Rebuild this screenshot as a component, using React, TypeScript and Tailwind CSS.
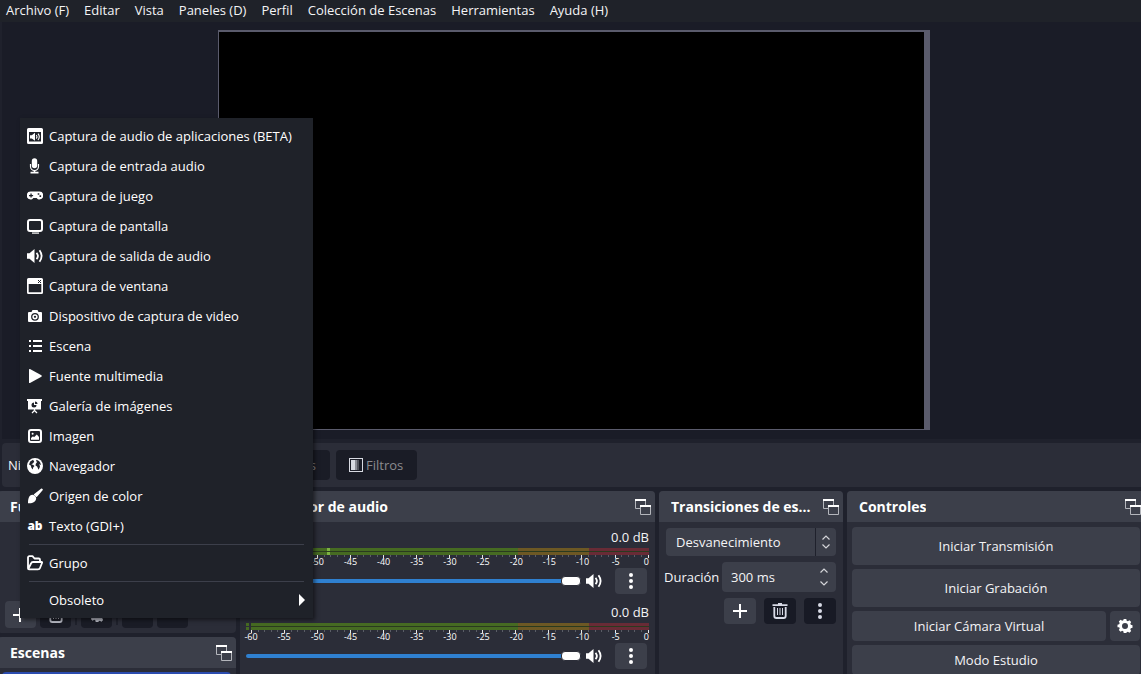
import React, { useState } from 'react';

type IconProps = { className?: string };

/* ---------- Icons ---------- */

const Svg = ({ children, className = '' }: { children: React.ReactNode; className?: string }) => (
  <svg viewBox="0 0 16 16" width="16" height="16" fill="currentColor" className={`shrink-0 ${className}`} aria-hidden="true">
    {children}
  </svg>
);

const AppAudioIcon = () => (
  <Svg>
    <path fillRule="evenodd" d="M1.5 0h13A1.5 1.5 0 0 1 16 1.5v13a1.5 1.5 0 0 1-1.5 1.5h-13A1.5 1.5 0 0 1 0 14.500v-13A1.500 1.500 0 0 1 1.500 0zM2 4v9.500h12V4z" />
    <path d="M3 7.200h1.800L8 4.800v8L4.800 10.400H3z" />
    <path d="M9.300 7q1.400 1.800 0 3.600M11 5.600q2.600 3.200 0 6.400" fill="none" stroke="currentColor" strokeWidth="1.100" />
  </Svg>
);

const MicIcon = () => (
  <Svg>
    <rect x="4.800" y="0.300" width="5.400" height="10" rx="2.700" />
    <path d="M3.500 6v2.500a4 4 0 0 0 8 0V6" fill="none" stroke="currentColor" strokeWidth="1.200" />
    <path d="M6.700 12h1.600v1.800h3.200V15.500h-8v-1.700h3.200z" />
  </Svg>
);

const GamepadIcon = () => (
  <Svg>
    <path fillRule="evenodd" d="M4 3.500h8a4 4 0 0 1 .5 8c-1.200 0-2-.5-2.800-1.500H6.300c-.8 1-1.600 1.500-2.800 1.500a4 4 0 0 1 .5-8zM3.400 5.500v1.400H2v1.300h1.400v1.400h1.300V8.200h1.400V6.900H4.700V5.500zM10.700 5.200v1.600h1.600V5.200zM12.500 7.300v1.600h1.600V7.300z" />
  </Svg>
);

const DisplayIcon = () => (
  <Svg>
    <rect x="1" y="2" width="14" height="11" rx="2" fill="none" stroke="currentColor" strokeWidth="2" />
    <rect x="5" y="14.500" width="7" height="1.200" />
  </Svg>
);

const SpeakerIcon = ({ className }: IconProps) => (
  <Svg className={className}>
    <path d="M0 5.300h2.500L7.500 1v14L2.500 10.700H0z" />
    <path d="M9.500 4.800q2.800 3.200 0 6.400M12.500 2.300q4.200 5.700 0 11.400" fill="none" stroke="currentColor" strokeWidth="1.800" />
  </Svg>
);

const WindowIcon = () => (
  <Svg>
    <path fillRule="evenodd" d="M1.500 0h13A1.500 1.500 0 0 1 16 1.500v13a1.500 1.500 0 0 1-1.500 1.500h-13A1.500 1.500 0 0 1 0 14.500v-13A1.500 1.500 0 0 1 1.500 0zM1.700 6v8.300h12.600V6z" />
    <path d="M11 2l3 3M14 2l-3 3" stroke="#1f2229" strokeWidth="1" />
  </Svg>
);

const CameraIcon = () => (
  <Svg>
    <path fillRule="evenodd" d="M5.500 2h5l1 2H14a1 1 0 0 1 1 1v8a1 1 0 0 1-1 1H2a1 1 0 0 1-1-1V5a1 1 0 0 1 1-1h2.500zM8 4.900a3.900 3.900 0 1 0 0 7.800 3.900 3.900 0 0 0 0-7.800z" />
    <circle cx="8" cy="8.800" r="1.900" fill="none" stroke="currentColor" strokeWidth="1.500" />
  </Svg>
);

const ListIcon = () => (
  <Svg>
    <path d="M2 2h2v2H2zM6 2h9v2H6zM2 7h2v2H2zM6 7h9v2H6zM2 12h2v2H2zM6 12h9v2H6z" />
  </Svg>
);

const PlayIcon = () => (
  <Svg>
    <path d="M2 1.500Q2 .6 3 1l11.400 6.300q1 .7 0 1.400L3 15Q2 15.400 2 14.500z" />
  </Svg>
);

const SlideshowIcon = () => (
  <Svg>
    <path fillRule="evenodd" d="M0 1h15v2h-1v8.500H1V3H0zM7 4.500a2.500 2.500 0 1 0 2.500 2.500H7zM8 3.500v2.500h2.500A2.500 2.500 0 0 0 8 3.500z" />
    <path d="M7.500 11v2M7.500 12.500L5 15M7.500 12.500L10 15" stroke="currentColor" strokeWidth="1.200" fill="none" />
  </Svg>
);

const ImageIcon = () => (
  <Svg>
    <rect x="2" y="2" width="12" height="12" rx="2" fill="none" stroke="currentColor" strokeWidth="2" />
    <circle cx="5.600" cy="5.800" r="1" />
    <path d="M4 11.800V10l2-1.800 1 1L9.800 6.500 12 9v2.800z" />
  </Svg>
);

const GlobeIcon = () => (
  <Svg>
    <circle cx="8" cy="8" r="8" />
    <path d="M6 1.800L3.200 3.500 2 6.500l1.800 1 .6 2.300 1.300 1.700.6-2.200L7.500 8 6 6.800 4.300 6.600 6.300 5 7.200 3.500zM9.500 1.800L9 3.200l1.300.6-1.500 1.900L8.500 7.600l1.600.9.700 1.600.6 1.600 1.100-1.700.5-1.900-1.100-1.800 2 .6-.6-2.100L12 3z" fill="#1f2229" />
  </Svg>
);

const BrushIcon = () => (
  <Svg>
    <path d="M14.300.6a1.200 1.200 0 0 1 1.500 1.500L9.600 9.200 6.600 6.600z" />
    <path d="M5.600 6.800A4.200 4.200 0 0 1 9.200 10.500C8.800 13.700 5.500 15.700 1 15.200 1 11 1.800 6.800 5.600 6.800z" />
  </Svg>
);

const TextIcon = () => (
  <span className="w-4 shrink-0 text-center text-xs leading-4 font-extrabold" aria-hidden="true">ab</span>
);

const FolderIcon = () => (
  <Svg>
    <path d="M1 13.500V2.500A1.300 1.300 0 0 1 2.300 1.200H5.500L7.500 3.500h4.200A1.300 1.300 0 0 1 13 4.800V6.500M1.300 13.800L4 8.500Q4.500 7 6 7h8.500q.9 0 .5 1l-2 5q-.4 1.300-2 1.300H2q-1 0-1-1" fill="none" stroke="currentColor" strokeWidth="1.800" strokeLinejoin="round" />
  </Svg>
);

const PopoutIcon = () => (
  <Svg className="text-[#b4b6bc]">
    <path d="M.5 2v7.500H5M10.500 2v4" fill="none" stroke="currentColor" />
    <path d="M0 0h11v2H0z" fill="#fff" />
    <path d="M5.500 8v7.500h10V8" fill="none" stroke="currentColor" />
    <path d="M5 6h11v2H5z" fill="#fff" />
  </Svg>
);

const PlusIcon = () => (
  <Svg>
    <path d="M7 1h2v6h6v2H9v6H7V9H1V7h6z" />
  </Svg>
);

const TrashIcon = () => (
  <Svg>
    <path d="M6 0h4v1.200h5.500V3H.5V1.200H6z" />
    <path d="M2.300 4v9q0 2 2 2h7.400q2 0 2-2V4" fill="none" stroke="currentColor" strokeWidth="1.800" />
    <path d="M5.500 5v7M8 5v7M10.500 5v7" stroke="currentColor" strokeWidth="1" />
  </Svg>
);

const DotsIcon = () => (
  <Svg>
    <circle cx="8" cy="2" r="2" />
    <circle cx="8" cy="8" r="2" />
    <circle cx="8" cy="14" r="2" />
  </Svg>
);

const GearIcon = () => (
  <Svg>
    <path fillRule="evenodd" d="M6.700 1h2.600l.4 1.700 1.200.5 1.500-.9 1.800 1.800-.9 1.500.5 1.200 1.700.4v2.600l-1.700.4-.5 1.200.9 1.500-1.800 1.800-1.500-.9-1.200.5L9.300 15H6.700l-.4-1.700-1.200-.5-1.500.9-1.800-1.800.9-1.500-.5-1.200L.5 9.300V6.700l1.700-.4.5-1.200-.9-1.500 1.800-1.800 1.500.9 1.200-.5zM8 5a3 3 0 1 0 0 6 3 3 0 0 0 0-6z" />
  </Svg>
);

const FiltersIcon = () => (
  <Svg className="text-[#d8dae2]">
    <rect x="1.500" y="1.500" width="13" height="13" fill="none" stroke="currentColor" />
    <path d="M3 3h4v10H3z" />
    <path d="M7 3h2v10H7z" opacity=".6" />
    <path d="M9 3h2v10H9z" opacity=".3" />
  </Svg>
);

const Chevron = ({ up }: { up?: boolean }) => (
  <svg viewBox="0 0 8 5" width="8" height="5" fill="none" stroke="#d4d5d9" strokeWidth="1.200" aria-hidden="true">
    <path d={up ? 'M.5 4.500L4 1l3.500 3.500' : 'M.5 .5L4 4 7.500 .5'} />
  </svg>
);

/* ---------- Data ---------- */

const menuBar = ['Archivo (F)', 'Editar', 'Vista', 'Paneles (D)', 'Perfil', 'Colección de Escenas', 'Herramientas', 'Ayuda (H)'];

const sources = [
  { label: 'Captura de audio de aplicaciones (BETA)', icon: <AppAudioIcon /> },
  { label: 'Captura de entrada audio', icon: <MicIcon /> },
  { label: 'Captura de juego', icon: <GamepadIcon /> },
  { label: 'Captura de pantalla', icon: <DisplayIcon /> },
  { label: 'Captura de salida de audio', icon: <SpeakerIcon /> },
  { label: 'Captura de ventana', icon: <WindowIcon /> },
  { label: 'Dispositivo de captura de video', icon: <CameraIcon /> },
  { label: 'Escena', icon: <ListIcon /> },
  { label: 'Fuente multimedia', icon: <PlayIcon /> },
  { label: 'Galería de imágenes', icon: <SlideshowIcon /> },
  { label: 'Imagen', icon: <ImageIcon /> },
  { label: 'Navegador', icon: <GlobeIcon /> },
  { label: 'Origen de color', icon: <BrushIcon /> },
  { label: 'Texto (GDI+)', icon: <TextIcon /> },
];

const scale = [-60, -55, -50, -45, -40, -35, -30, -25, -20, -15, -10, -5, 0];
const minorTicks = Array.from({ length: 61 }, (_, i) => i);

/* ---------- Building blocks ---------- */

const Dock = ({ title, className = '', children }: { title: string; className?: string; children: React.ReactNode }) => (
  <section className={`flex flex-col overflow-hidden rounded-t bg-[#2b2d38] ${className}`}>
    <header className="flex h-[31px] shrink-0 items-center justify-between gap-3 bg-[#3c3f4a] pr-1 pl-3">
      <h2 className="truncate text-sm font-bold text-white">{title}</h2>
      <PopoutIcon />
    </header>
    {children}
  </section>
);

const MenuItem = ({ label, icon, submenu }: { label: string; icon?: React.ReactNode; submenu?: boolean }) => (
  <li role="none">
    <button role="menuitem" className="flex h-[30px] w-full items-center gap-1.5 pr-2 pl-[7px] text-left hover:bg-[#2f3a63]">
      {icon ?? <span className="w-4" />}
      <span className="flex-1">{label}</span>
      {submenu && (
        <svg viewBox="0 0 6 12" width="6" height="12" fill="#fff" aria-hidden="true">
          <path d="M0 0l6 6-6 6z" />
        </svg>
      )}
    </button>
  </li>
);

const Separator = () => <li role="separator" className="mx-[9px] my-[3px] h-px bg-[#3c3f4a]" />;

const SourceMenu = () => (
  <ul role="menu" className="absolute top-[118px] left-5 z-10 w-[293px] bg-[#1f2229] py-[3px] text-white shadow-[2px_2px_4px_rgba(0,0,0,0.5)]">
    {sources.map((s) => (
      <MenuItem key={s.label} label={s.label} icon={s.icon} />
    ))}
    <Separator />
    <MenuItem label="Grupo" icon={<FolderIcon />} />
    <Separator />
    <MenuItem label="Obsoleto" submenu />
  </ul>
);

const MeterBar = ({ peak }: { peak?: string }) => (
  <div className="relative flex h-[3px]">
    <div className="w-[67%] bg-[#466b22]" />
    <div className="w-[18%] bg-[#6d5824]" />
    <div className="flex-1 bg-[#692b36]" />
    {peak && <div className="absolute h-[3px] w-[3px] bg-[#7cb342]" style={{ left: peak }} />}
  </div>
);

const Channel = ({ name, peaks }: { name: string; peaks?: [string, string] }) => {
  const [volume, setVolume] = useState(100);

  return (
    <div className="px-1.5 pt-1.5 pb-[3px]">
      <div className="flex h-5 items-center justify-end pb-0.5">0.0 dB</div>

      <div className="flex gap-0.5">
        <div className="flex w-[3px] flex-col gap-px">
          <div className="h-[3px] bg-[#466b22]" />
          <div className="h-[3px] bg-[#466b22]" />
        </div>
        <div className="flex-1">
          <div className="flex flex-col gap-px bg-[#2a3a1f]">
            <MeterBar peak={peaks?.[0]} />
            <MeterBar peak={peaks?.[1]} />
          </div>
          <div className="flex h-[3px] justify-between">
            {minorTicks.map((i) => (
              <span key={i} className={i % 5 === 0 ? 'h-[3px] w-px bg-[#e4e5e8]' : 'h-0.5 w-px bg-[#5a5d66]'} />
            ))}
          </div>
          <div className="flex h-2.5 justify-between text-[9px] leading-[8px] text-white">
            {scale.map((db) => (
              <span key={db} className={db === 0 ? 'flex w-0 justify-end' : 'flex w-0 justify-center'}>{db}</span>
            ))}
          </div>
        </div>
      </div>

      <div className="flex h-[26px] items-center">
        <input
          type="range"
          aria-label={`Volumen de ${name}`}
          value={volume}
          onChange={(e) => setVolume(Number(e.target.value))}
          className="h-1 min-w-0 flex-1 appearance-none rounded-sm bg-[#2f80d0] [&::-webkit-slider-thumb]:h-2.5 [&::-webkit-slider-thumb]:w-5 [&::-webkit-slider-thumb]:appearance-none [&::-webkit-slider-thumb]:rounded [&::-webkit-slider-thumb]:border [&::-webkit-slider-thumb]:border-[#2b2d38] [&::-webkit-slider-thumb]:bg-white"
        />
        <button aria-label={`Silenciar ${name}`} className="ml-[5px] text-white">
          <SpeakerIcon />
        </button>
        <button aria-label={`Opciones de ${name}`} className="mr-0.5 ml-[13px] flex h-[26px] w-8 items-center justify-center rounded bg-[#3c3f4a] text-white">
          <DotsIcon />
        </button>
      </div>
    </div>
  );
};

const IconButton = ({ label, active, children }: { label: string; active?: boolean; children: React.ReactNode }) => (
  <button
    aria-label={label}
    className={`flex h-[26px] w-8 items-center justify-center rounded ${active ? 'bg-[#3c3f4a] text-white' : 'bg-[#181a25] text-[#d8dae6]'}`}
  >
    {children}
  </button>
);

const ControlButton = ({ label, className = 'h-[38px]' }: { label: string; className?: string }) => (
  <button className={`flex shrink-0 items-center justify-center rounded bg-[#3c3f4a] hover:bg-[#4a4d59] ${className}`}>{label}</button>
);

/* ---------- Page ---------- */

export default function App() {
  const [transition, setTransition] = useState('Desvanecimiento');
  const [duration, setDuration] = useState(300);

  return (
    <div className="relative flex h-screen flex-col overflow-hidden bg-[#1f212c] font-['Open_Sans','Noto_Sans',sans-serif] text-[13px] leading-5 text-[#f4f4f6]">
      <nav className="flex h-[22px] shrink-0 items-center gap-[15px] bg-[#1f2229] pb-0.5 pl-1.5 whitespace-nowrap">
        {menuBar.map((item) => (
          <button key={item}>{item}</button>
        ))}
      </nav>

      {/* Preview */}
      <main className="ml-0.5 flex min-h-0 flex-1 justify-center bg-[#1a1c27] pt-2 pb-[9px] pl-[5px]">
        <div className="aspect-[712/400] h-full border-t-2 border-r-[6px] border-b border-l border-[#5a5b6c] bg-black" />
      </main>

      {/* Source toolbar */}
      <div className="mt-1 ml-0.5 flex h-11 shrink-0 items-center gap-1.5 rounded-l bg-[#2b2d38] pl-1.5">
        <span className="w-[198px] truncate">Ninguna fuente seleccionada</span>
        <button className="flex h-[30px] w-[118px] items-center justify-end rounded bg-[#1a1c26] pr-3.5 text-[#8a8b8f]">Propiedades</button>
        <button className="flex h-[30px] items-center gap-0.5 rounded bg-[#1a1c26] pr-3.5 pl-3 text-[#8a8b8f]">
          <FiltersIcon />
          Filtros
        </button>
      </div>

      {/* Docks */}
      <div className="mt-1 flex h-[183px] shrink-0 gap-1">
        <div className="flex w-[236px] flex-col gap-1">
          <Dock title="Fuentes" className="-ml-0.5 h-[142px] shrink-0 rounded-b">
            <div className="mt-auto mb-[5px] flex items-center gap-1 pl-[7px]">
              <button aria-label="Añadir fuente" className="flex h-[27px] w-[31px] items-center rounded bg-[#3c3f4a] pl-[7px] text-white"><PlusIcon /></button>
              <button aria-label="Eliminar fuente" className="flex h-[27px] w-[31px] items-center justify-center rounded bg-[#1a1c26] text-[#b9bbc6]"><TrashIcon /></button>
              <span className="h-5 w-0.5 bg-[#1f212c]" />
              <button aria-label="Propiedades de fuente" className="flex h-[27px] w-[31px] items-center justify-center rounded bg-[#1a1c26] text-[#b9bbc6]"><GearIcon /></button>
              <span className="h-5 w-0.5 bg-[#1f212c]" />
              <button aria-label="Subir" className="h-[27px] w-[31px] rounded bg-[#1a1c26]" />
              <button aria-label="Bajar" className="h-[27px] w-[31px] rounded bg-[#1a1c26]" />
            </div>
          </Dock>
          <Dock title="Escenas" className="-ml-0.5 flex-1">
            <div className="mt-1 mr-[5px] ml-1 h-6 shrink-0 rounded bg-[#2b4caf]" />
          </Dock>
        </div>

        <Dock title="Mezclador de audio" className="min-w-0 flex-1">
          <Channel name="Audio del escritorio" peaks={['19%', '19%']} />
          <Channel name="Mic/Aux" />
        </Dock>

        <Dock title="Transiciones de escena" className="w-[184px]">
          <div className="flex flex-col gap-1.5 pt-1.5 pr-[7px] pl-[5px]">
            <div className="relative ml-0.5">
              <select
                aria-label="Transición"
                value={transition}
                onChange={(e) => setTransition(e.target.value)}
                className="block h-7 w-full appearance-none rounded bg-[#3c3f4a] pl-2.5"
              >
                <option>Desvanecimiento</option>
                <option>Corte</option>
              </select>
              <div className="pointer-events-none absolute inset-y-0 right-0 flex w-[21px] flex-col items-center justify-center gap-1 border-l border-[#1f212c]">
                <Chevron up />
                <Chevron />
              </div>
            </div>
            <div className="flex items-center justify-between">
              <label htmlFor="duration">Duración</label>
              <div className="flex h-[30px] w-[114px] items-center justify-between rounded bg-[#3c3f4a] pr-2 pl-[9px]">
                <input
                  id="duration"
                  value={`${duration} ms`}
                  onChange={(e) => setDuration(parseInt(e.target.value, 10) || 0)}
                  className="w-16 bg-transparent outline-none"
                />
                <div className="flex flex-col gap-2">
                  <button aria-label="Aumentar" className="block" onClick={() => setDuration(duration + 50)}><Chevron up /></button>
                  <button aria-label="Reducir" className="block" onClick={() => setDuration(Math.max(0, duration - 50))}><Chevron /></button>
                </div>
              </div>
            </div>
            <div className="flex justify-end gap-2">
              <IconButton label="Añadir transición" active><PlusIcon /></IconButton>
              <IconButton label="Eliminar transición"><TrashIcon /></IconButton>
              <IconButton label="Opciones de transición"><DotsIcon /></IconButton>
            </div>
          </div>
        </Dock>

        <Dock title="Controles" className="-mr-1 w-[298px]">
          <div className="flex flex-col gap-1 pt-[5px] pr-[5px] pl-[5px]">
            <ControlButton label="Iniciar Transmisión" />
            <ControlButton label="Iniciar Grabación" />
            <div className="flex gap-1">
              <ControlButton label="Iniciar Cámara Virtual" className="h-[30px] flex-1" />
              <button aria-label="Configurar cámara virtual" className="flex h-[30px] w-[30px] items-center justify-center rounded bg-[#3c3f4a] text-white">
                <GearIcon />
              </button>
            </div>
            <ControlButton label="Modo Estudio" className="h-[30px]" />
          </div>
        </Dock>
      </div>

      <SourceMenu />
    </div>
  );
}
